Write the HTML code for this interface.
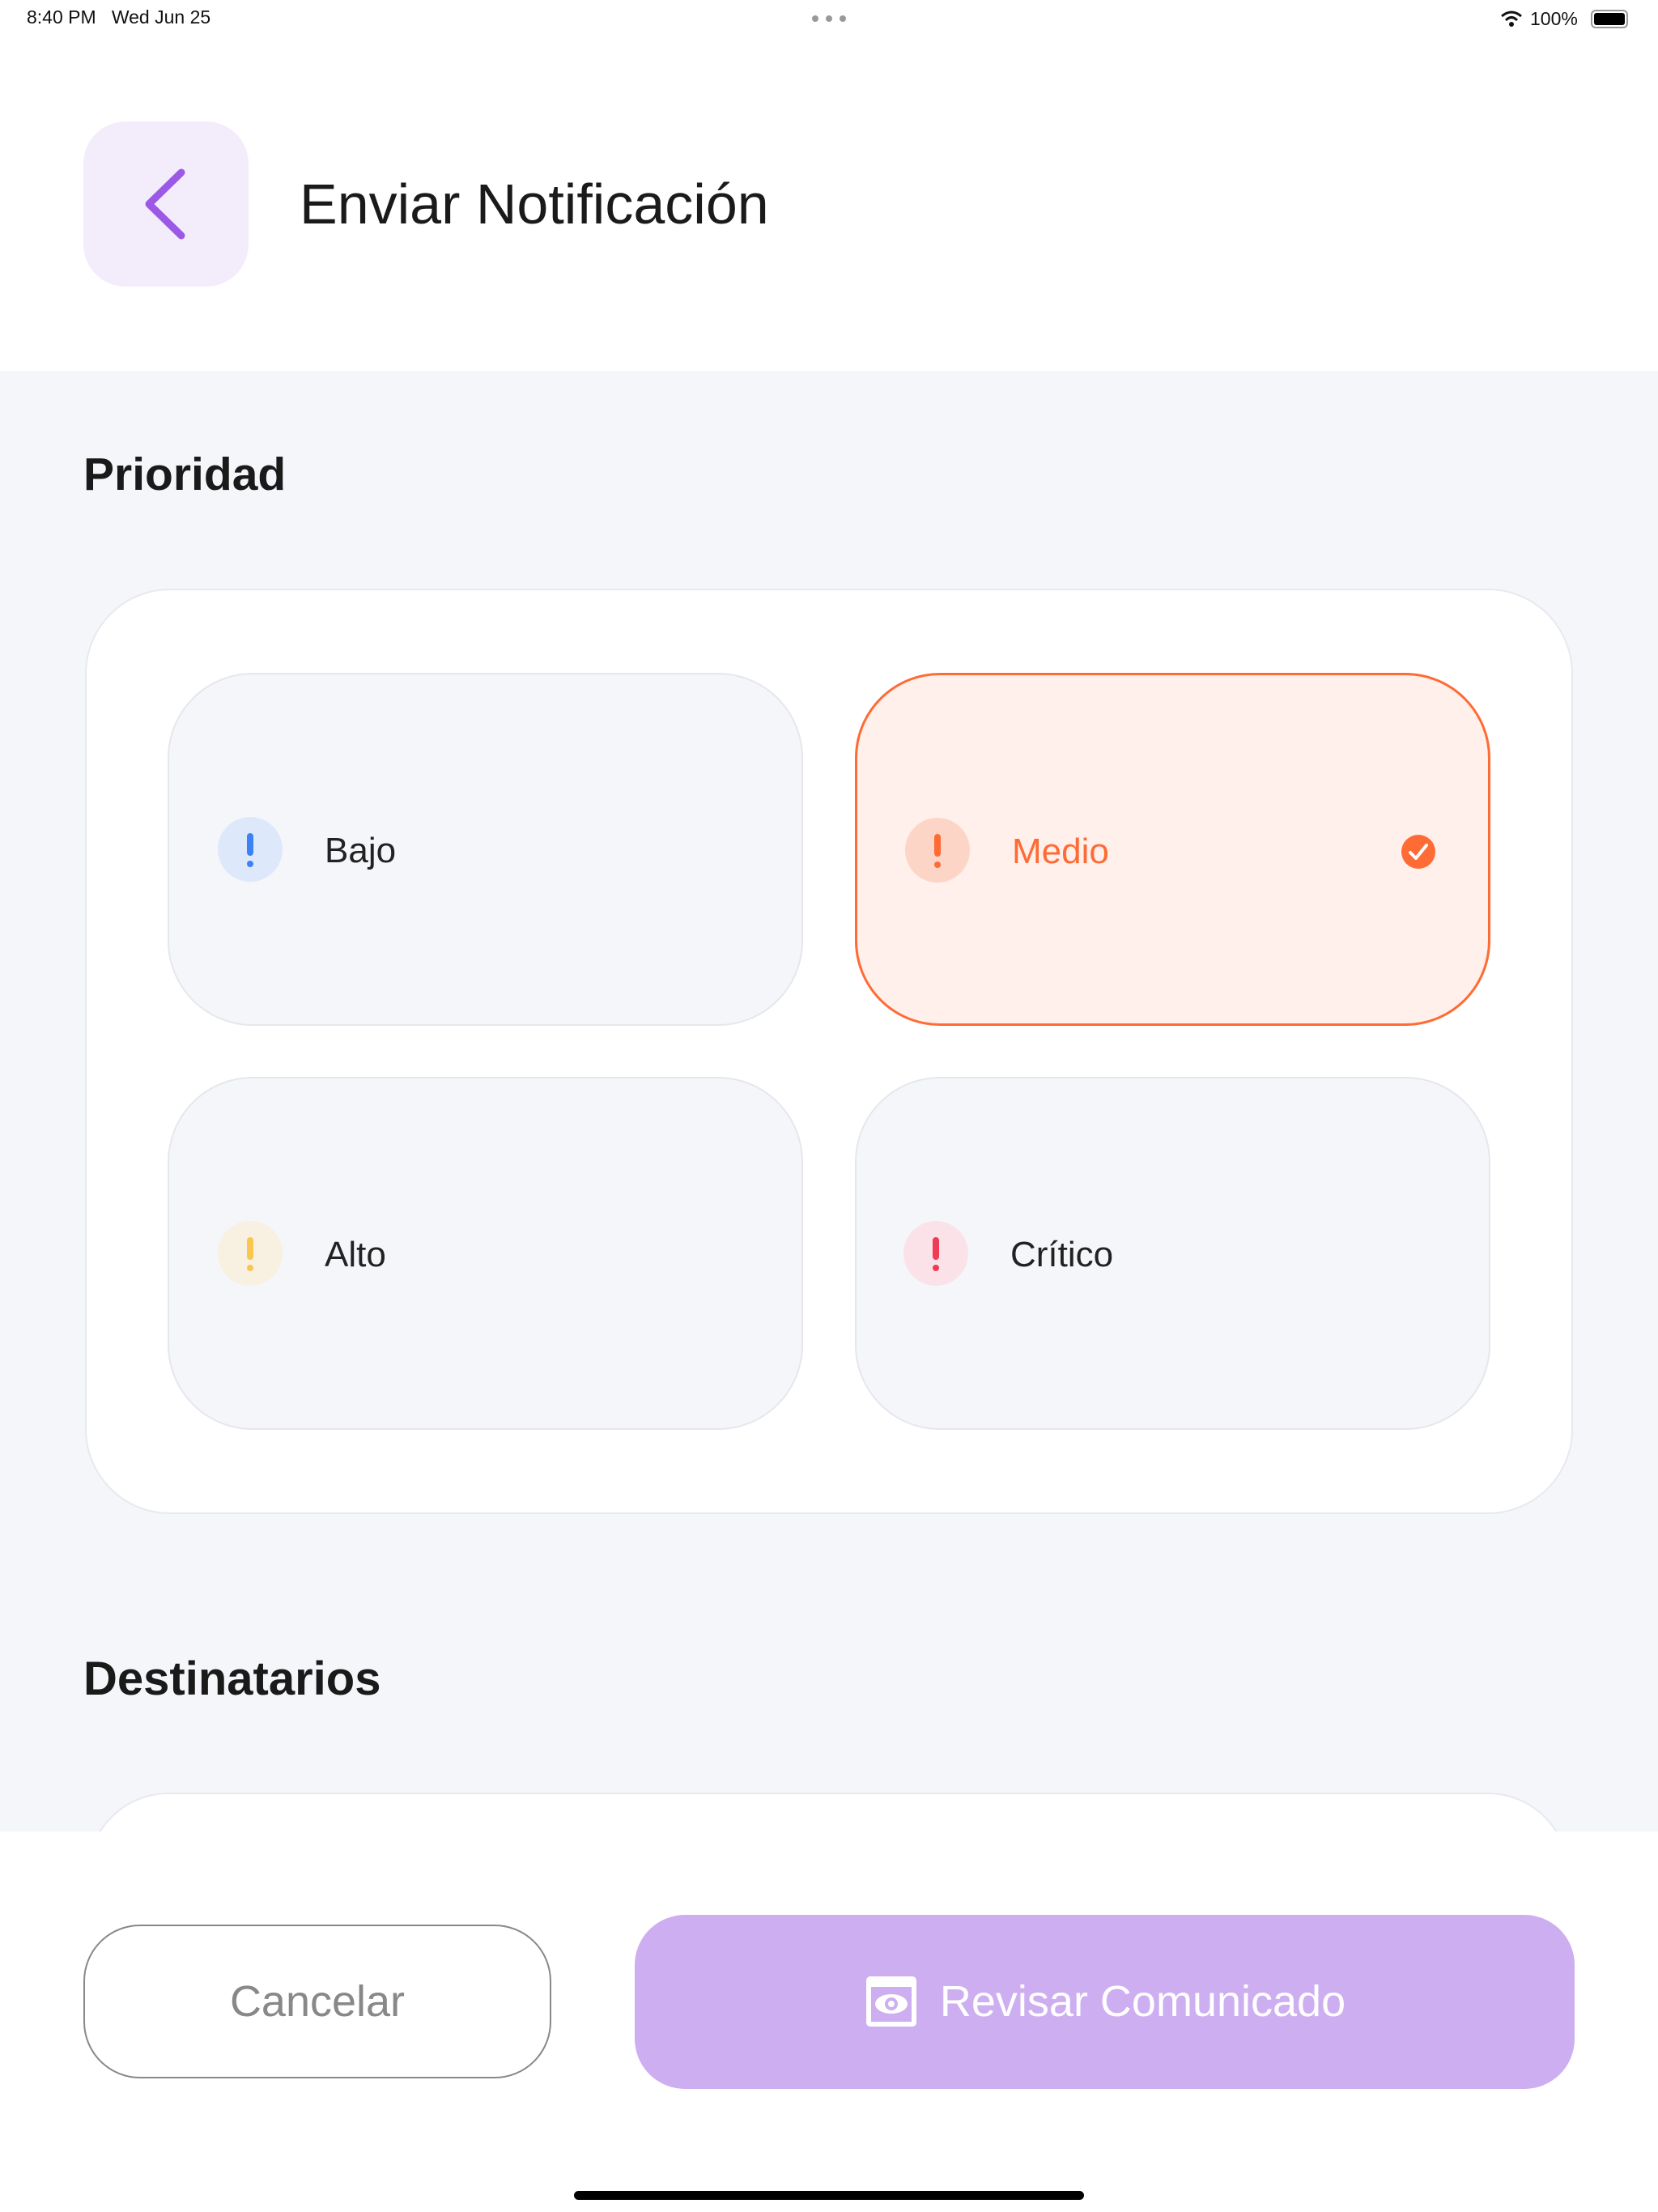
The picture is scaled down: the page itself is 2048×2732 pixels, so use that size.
<!DOCTYPE html>
<html><head><meta charset="utf-8"><style>
*{margin:0;padding:0;box-sizing:border-box}
body{width:2048px;height:2732px;position:relative;background:#fff;font-family:"Liberation Sans",sans-serif;overflow:hidden}
.abs{position:absolute}
.gray{left:0;top:458px;width:2048px;height:1804px;background:#f5f6fa}
.tile{position:absolute;width:785px;height:436px;border-radius:105px;background:#f5f6fa;border:2px solid #e6e7ec}
.ic{position:absolute;left:60px;top:176px;width:80px;height:80px;border-radius:50%}
.ic i{position:absolute;left:36px;top:20px;width:8px;height:28px;border-radius:4px}
.ic b{position:absolute;left:36px;top:54px;width:8px;height:8px;border-radius:50%}
.lbl{position:absolute;left:192px;top:0;line-height:436px;font-size:44px;color:#222}
</style></head><body>
<div class="abs" style="left:33px;top:8px;font-size:23px;color:#111">8:40 PM&nbsp;&nbsp;&nbsp;Wed Jun 25</div>
<div class="abs" style="left:1003px;top:19px;width:42px;height:8px;display:flex;justify-content:space-between"><span style="width:8px;height:8px;border-radius:50%;background:#999"></span><span style="width:8px;height:8px;border-radius:50%;background:#999"></span><span style="width:8px;height:8px;border-radius:50%;background:#999"></span></div>
<svg class="abs" style="left:1853px;top:12px" width="28" height="22"><path d="M2 8 Q14 -2 26 8" fill="none" stroke="#111" stroke-width="3"/><path d="M7 13 Q14 6 21 13" fill="none" stroke="#111" stroke-width="3"/><circle cx="14" cy="18" r="3" fill="#111"/></svg>
<div class="abs" style="left:1890px;top:10px;font-size:23px;color:#111">100%</div>
<div class="abs" style="left:1965px;top:12px;width:46px;height:23px;border:2px solid #999;border-radius:6px;padding:2px"><div style="width:100%;height:100%;background:#000;border-radius:3px"></div></div>

<div class="abs" style="left:103px;top:150px;width:204px;height:204px;border-radius:52px;background:#f3edfb"></div>
<svg class="abs" style="left:170px;top:205px" width="70" height="94"><path d="M54 8 L14 47 L54 86" fill="none" stroke="#9b59e6" stroke-width="9" stroke-linecap="round" stroke-linejoin="round"/></svg>
<div class="abs" style="left:370px;top:212px;font-size:70px;color:#1a1a1a">Enviar Notificación</div>

<div class="abs gray"></div>
<div class="abs" style="left:103px;top:553px;font-size:57px;font-weight:bold;color:#1a1a1a">Prioridad</div>
<div class="abs" style="left:105px;top:727px;width:1838px;height:1143px;border-radius:105px;background:#fff;border:2px solid #e8e9ee"></div>

<div class="tile" style="left:207px;top:831px"><div class="ic" style="background:#dde8fb"><i style="background:#3b82f6"></i><b style="background:#3b82f6"></b></div><div class="lbl">Bajo</div></div>
<div class="tile" style="left:1056px;top:831px;background:#fff0ec;border:3px solid #ff6b35"><div class="ic" style="background:#fdd5c7;left:59px"><i style="background:#ff6b35"></i><b style="background:#ff6b35"></b></div><div class="lbl" style="color:#ff6b35;left:191px">Medio</div>
<svg class="abs" style="left:671px;top:196px" width="44" height="44"><circle cx="22" cy="22" r="21" fill="#ff6b35"/><path d="M12 23 L19 30 L32 14" fill="none" stroke="#fff" stroke-width="4" stroke-linecap="round" stroke-linejoin="round"/></svg></div>
<div class="tile" style="left:207px;top:1330px"><div class="ic" style="background:#f8f0e0"><i style="background:#f9c74f"></i><b style="background:#f9c74f"></b></div><div class="lbl">Alto</div></div>
<div class="tile" style="left:1056px;top:1330px"><div class="ic" style="background:#fbe2e8;left:58px"><i style="background:#ef3b55"></i><b style="background:#ef3b55"></b></div><div class="lbl" style="left:190px">Crítico</div></div>

<div class="abs" style="left:103px;top:2040px;font-size:58px;font-weight:bold;color:#1a1a1a">Destinatarios</div>
<div class="abs" style="left:108px;top:2214px;width:1830px;height:200px;border-radius:105px;background:#fff;border:2px solid #e8e9ee"></div>

<div class="abs" style="left:0;top:2262px;width:2048px;height:470px;background:#fff"></div>
<div class="abs" style="left:103px;top:2377px;width:578px;height:190px;border-radius:70px;border:2px solid #888;text-align:center;line-height:186px;font-size:54px;color:#888">Cancelar</div>
<div class="abs" style="left:784px;top:2365px;width:1161px;height:215px;border-radius:62px;background:#cdaef0;color:#fff;font-size:54px;line-height:215px;text-align:center">
<svg style="vertical-align:middle;margin-right:26px;position:relative;top:-4px" width="68" height="68"><rect x="3" y="3" width="62" height="62" rx="5" fill="#fff"/><rect x="9" y="16" width="50" height="43" fill="#cdaef0"/><ellipse cx="34" cy="37" rx="20" ry="12" fill="#fff"/><circle cx="34" cy="37" r="8" fill="#cdaef0"/><circle cx="34" cy="37" r="4" fill="#fff"/></svg>Revisar Comunicado</div>
<div class="abs" style="left:709px;top:2706px;width:630px;height:11px;border-radius:6px;background:#000"></div>
</body></html>
